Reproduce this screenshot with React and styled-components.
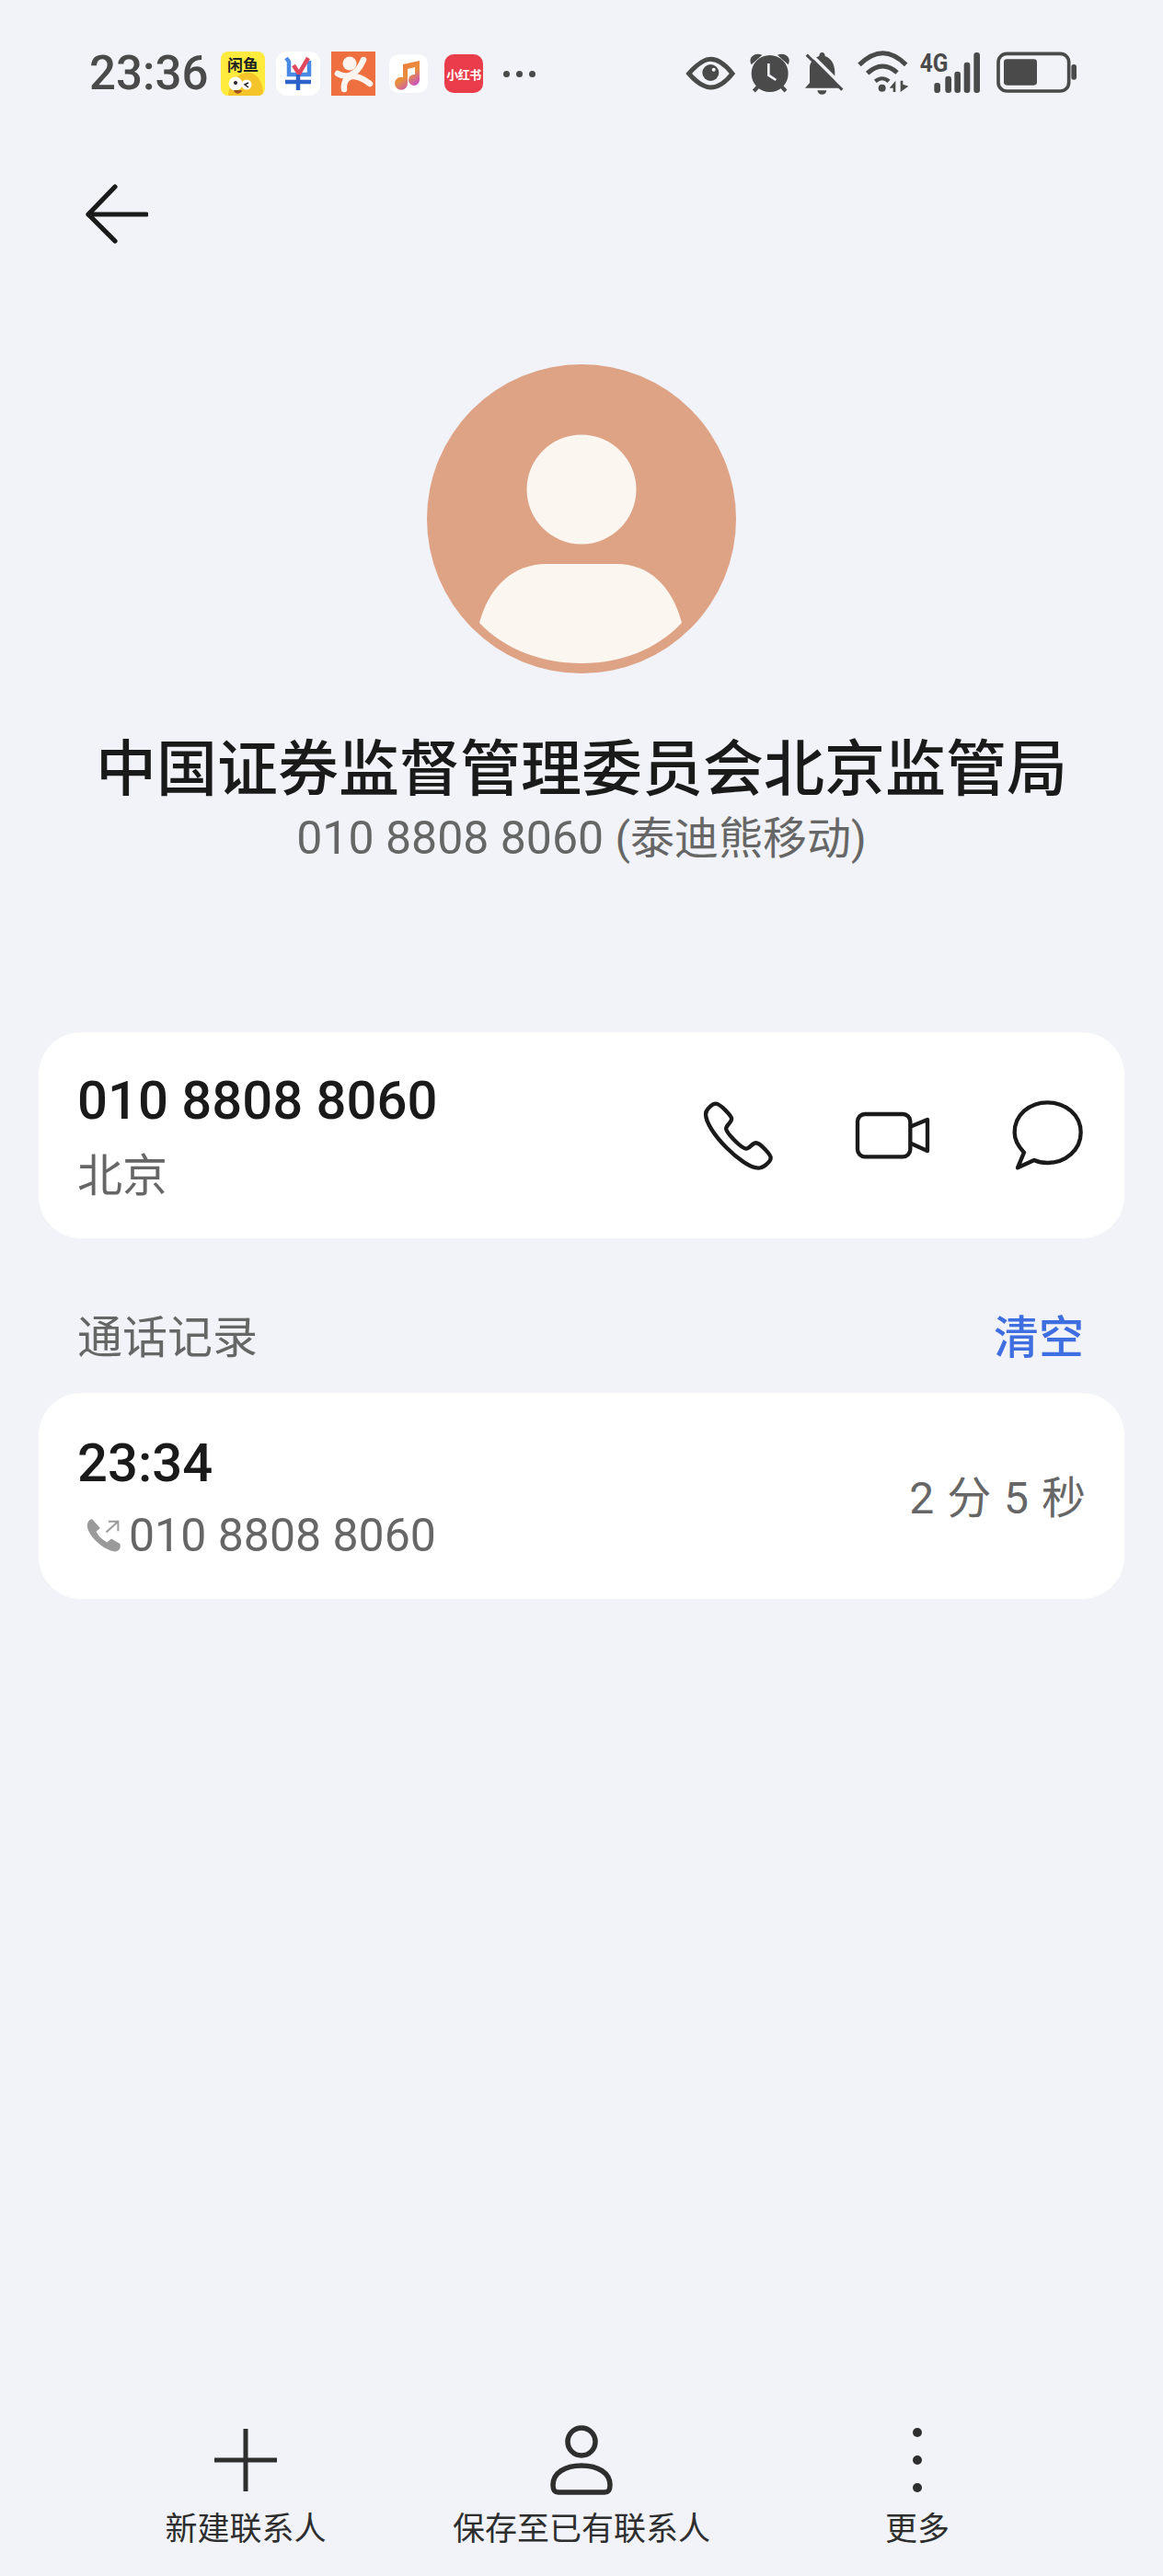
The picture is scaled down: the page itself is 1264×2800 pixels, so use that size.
import React from 'react';
import styled, { createGlobalStyle } from 'styled-components';

const GlobalStyle = createGlobalStyle`
    html, body {
        margin: 0;
        padding: 0;
        background: #f1f3f8;
    }
    * {
        box-sizing: border-box;
    }
`

const Page = styled.div`
    width: 1264px;
    height: 2800px;
    display: flex;
    flex-direction: column;
    background: #f1f3f8;
    color: #1a1a1a;
    font-family: Roboto, "Noto Sans CJK SC", sans-serif;
`

const StatusBar = styled.div`
    height: 105px;
    padding: 55px 91px 0 97px;
    display: flex;
    align-items: center;
`

const Clock = styled.span`
    width: 137px;
    font-size: 51px;
    line-height: 50px;
    font-weight: 500;
    color: #4a4a4a;
    letter-spacing: 0;
`

const AppSlot = styled.div`
    width: 60px;
    height: 50px;
    display: flex;
    align-items: center;
    justify-content: center;
`

const Tile = styled.div`
    width: ${p => p.$size}px;
    height: ${p => p.$size}px;
    border-radius: ${p => p.$radius}px;
    background: ${p => p.$bg};
    overflow: hidden;
    display: flex;
    align-items: center;
    justify-content: center;
    svg {
        display: block;
    }
`

const TileText = styled.span`
    color: #fff;
    font-size: 13px;
    font-weight: 700;
    white-space: nowrap;
    letter-spacing: -0.5px;
`

const MoreDots = styled.div`
    margin-left: 13px;
    display: flex;
    gap: 7px;
    span {
        width: 7px;
        height: 7px;
        border-radius: 50%;
        background: #4a4a4a;
    }
`

const StatusIcons = styled.div`
    margin-left: auto;
    display: flex;
    svg {
        display: block;
        overflow: visible;
    }
`

const BackRow = styled.div`
    margin-top: 95px;
    padding-left: 93px;
    height: 65px;
`

const Profile = styled.div`
    margin-top: 131px;
    display: flex;
    flex-direction: column;
    align-items: center;
`

const Name = styled.div`
    margin-top: 61px;
    font-size: 66px;
    line-height: 88px;
    font-weight: 500;
    white-space: nowrap;
`

const SubName = styled.div`
    font-size: 50px;
    line-height: 60px;
    color: #666;
    white-space: nowrap;
`

const Carrier = styled.span`
    font-size: 48px;
`

const Card = styled.div`
    margin: 0 42px;
    height: 224px;
    padding: 0 42px;
    background: #fff;
    border-radius: 46px;
    display: flex;
    align-items: center;
    justify-content: space-between;
`

const PhoneCard = styled(Card)`
    margin-top: 180px;
`

const Stack = styled.div`
    padding-top: ${p => p.$top}px;
    display: flex;
    flex-direction: column;
    gap: ${p => p.$gap}px;
`

const Primary = styled.div`
    font-size: 58px;
    line-height: 72px;
    font-weight: 500;
`

const Secondary = styled.div`
    font-size: 49px;
    line-height: 64px;
    color: #666;
`

const Actions = styled.div`
    display: flex;
    align-items: center;
    gap: 87px;
    svg {
        display: block;
    }
`

const SectionHead = styled.div`
    margin: 76px 86px 0 84px;
    padding-top: 1px;
    height: 92px;
    display: flex;
    justify-content: space-between;
    font-size: 49px;
    line-height: 64px;
    color: #666;
`

const ClearLink = styled.span`
    color: #3f6ee0;
    font-weight: 500;
`

const CallNumber = styled.div`
    display: flex;
    align-items: center;
    gap: 8px;
    margin-left: 10px;
    font-size: 50px;
    line-height: 64px;
    color: #666;
    svg {
        display: block;
    }
`

const Duration = styled.div`
    padding-bottom: 5px;
    font-size: 48px;
    color: #666;
    word-spacing: 2px;
`

const BottomBar = styled.div`
    margin-top: auto;
    padding-bottom: 27px;
    display: grid;
    grid-template-columns: repeat(3, 365px);
    justify-content: center;
`

const BarItem = styled.div`
    display: flex;
    flex-direction: column;
    align-items: center;
    gap: 15px;
    color: #2e2e2e;
    svg {
        display: block;
    }
`

const BarLabel = styled.div`
    font-size: 35px;
    line-height: 46px;
    white-space: nowrap;
`

const StatusGlyph = ({from, to, children}) => (
    <svg width={(to - from) / 3} height="50" viewBox={`${from} 30 ${to - from} 150`} fill="#4a4a4a">
        {children}
    </svg>
)

const Xianyu = () => (
    <Tile $size={48} $radius={8} $bg="#ffeb3d">
        <svg width="48" height="48" viewBox="0 0 48 48">
            <text x="24" y="21" textAnchor="middle" fontSize="17" fontWeight="700" fill="#222" fontFamily="'Noto Sans CJK SC', sans-serif">闲鱼</text>
            <path d="M8 48 C9 34 18 23 30 23 C39 23 46 32 46 48 Z" fill="#f4c428" />
            <circle cx="16" cy="35" r="7.5" fill="#fff" />
            <circle cx="28" cy="36" r="5.5" fill="#fff" />
            <circle cx="16" cy="34" r="2" fill="#222" />
            <path d="M30 34 L26 36 L30 39" fill="none" stroke="#222" strokeWidth="1.5" />
            <path d="M14 42 H23 C22 47 15 47 14 42 Z" fill="#a4521c" />
        </svg>
    </Tile>
)

const Receipt = () => (
    <Tile $size={48} $radius={12} $bg="#fff">
        <svg width="48" height="48" viewBox="0 0 48 48" fill="none" strokeWidth="4.5">
            <path d="M11 7 L14 11 V25 H36 V10" stroke="#4a8ae6" />
            <path d="M19 15 L25 24 L35 7" stroke="#e0475f" />
            <path d="M10 33 H38 M24 25 V42" stroke="#2f62c8" />
        </svg>
    </Tile>
)

const Dianping = () => (
    <Tile $size={48} $radius={0} $bg="#ee7040">
        <svg width="48" height="48" viewBox="0 0 48 48" fill="none" stroke="#fbf4ef" strokeWidth="6.5" strokeLinecap="round">
            <circle cx="20" cy="13" r="7.5" fill="#fbf4ef" stroke="none" />
            <path d="M7 24 C15 29 27 28 35 9" />
            <path d="M14 41 C13 32 18 27 24 27 C32 27 38 32 42 35" />
        </svg>
    </Tile>
)

const MusicNote = () => (
    <Tile $size={42} $radius={10} $bg="#fff">
        <svg width="42" height="42" viewBox="0 0 42 42">
            <defs>
                <linearGradient id="note" x1="0" y1="0" x2="0.6" y2="1">
                    <stop offset="0" stopColor="#f0703a" />
                    <stop offset="0.6" stopColor="#e8903e" />
                    <stop offset="1" stopColor="#c850c8" />
                </linearGradient>
            </defs>
            <path d="M15 11 L33 7 V28 a6 6 0 1 1 -5 -6 V14 L20 16 V31 a7 7 0 1 1 -5 -6 Z" fill="url(#note)" />
        </svg>
    </Tile>
)

const StatusCluster = () => (
    <StatusIcons>
        <StatusGlyph from={39} to={231}>
            <path d="M56 105 C85 72 105 58 127 58 C150 58 172 72 198 105 C172 138 150 150 127 150 C105 150 85 138 56 105 Z" fill="none" stroke="#4a4a4a" strokeWidth="15" />
            <circle cx="127" cy="102" r="27" />
            <circle cx="137" cy="92" r="6" fill="#f1f3f8" />
        </StatusGlyph>
        <StatusGlyph from={231} to={411}>
            <circle cx="320" cy="105" r="60" />
            <path d="M260 76 C248 55 268 34 295 44 Z M380 76 C392 55 372 34 345 44 Z" />
            <path d="M286 143 L268 162 M354 143 L372 162" stroke="#4a4a4a" strokeWidth="12" />
            <path d="M316 72 V110 L340 126" fill="none" stroke="#f1f3f8" strokeWidth="8" />
        </StatusGlyph>
        <StatusGlyph from={411} to={591}>
            <path d="M490 36 C497 36 500 42 500 48 C520 54 532 75 532 100 V135 L548 152 H435 L450 135 V85 C450 68 465 53 481 48 C481 42 484 36 490 36 Z" />
            <path d="M475 160 H505 C503 178 478 178 475 160 Z" />
            <path d="M448 36 L568 156" stroke="#f1f3f8" strokeWidth="11" />
            <path d="M440 44 L556 158" stroke="#4a4a4a" strokeWidth="9" />
        </StatusGlyph>
        <StatusGlyph from={591} to={801}>
            <path d="M612 76 C665 26 712 26 764 76" fill="none" stroke="#4a4a4a" strokeWidth="15" />
            <path d="M638 104 C670 74 705 74 735 102" fill="none" stroke="#4a4a4a" strokeWidth="15" />
            <path d="M664 130 C678 118 695 118 708 130" fill="none" stroke="#4a4a4a" strokeWidth="13" />
            <circle cx="686" cy="152" r="12" />
            <path d="M710 152 L730 128 V165 H722 V152 Z M746 128 H754 V140 L772 146 L746 165 Z" />
        </StatusGlyph>
        <StatusGlyph from={801} to={1035}>
            <text x="809" y="100" fontSize="84" fontWeight="700" textLength="92" lengthAdjust="spacingAndGlyphs" fontFamily="Roboto, sans-serif">4G</text>
            <rect x="856" y="135" width="20" height="33" rx="9" />
            <rect x="892" y="113" width="20" height="55" rx="9" />
            <rect x="922" y="98" width="20" height="70" rx="9" />
            <rect x="953" y="68" width="20" height="100" rx="9" />
            <rect x="985" y="36" width="20" height="132" rx="9" />
        </StatusGlyph>
        <StatusGlyph from={1035} to={1329}>
            <rect x="1065" y="40" width="230" height="122" rx="28" fill="none" stroke="#4a4a4a" strokeWidth="11" />
            <rect x="1083" y="58" width="108" height="85" rx="10" />
            <rect x="1303" y="75" width="17" height="50" rx="8" />
        </StatusGlyph>
    </StatusIcons>
)

const PhoneIcon = () => (
    <svg width="77" height="77" viewBox="190 105 230 230" fill="none" stroke="#1a1a1a" strokeWidth="13" strokeLinejoin="round">
        <path d="M232 116 C245 116 283 155 283 165 C283 178 265 185 265 197 C265 210 315 262 330 262 C342 262 350 243 362 243 C375 243 410 280 410 292 C410 305 385 325 370 325 C320 325 199 205 199 150 C199 135 220 116 232 116 Z" />
    </svg>
)

const VideoIcon = () => (
    <svg width="85" height="55" viewBox="685 140 255 165" fill="none" stroke="#1a1a1a" strokeWidth="13" strokeLinejoin="round">
        <rect x="697" y="152" width="172" height="139" rx="24" />
        <path d="M872 192 L925 170 V272 L872 248" />
    </svg>
)

const ChatIcon = () => (
    <svg width="80" height="78" viewBox="1198 105 240 234" fill="none" stroke="#1a1a1a" strokeWidth="13" strokeLinejoin="round">
        <path d="M1237 278 C1215 255 1206 235 1206 213 C1206 155 1255 115 1313 115 C1372 115 1422 155 1422 213 C1422 270 1372 312 1313 312 C1297 312 1285 310 1270 303 L1216 328 Z" />
    </svg>
)

const OutgoingIcon = () => (
    <svg width="38" height="38" viewBox="100 85 115 115">
        <path d="M118 88 C105 92 100 105 104 120 C115 155 160 190 190 195 C205 197 215 185 210 170 L182 153 L167 165 C150 155 140 145 132 130 L145 118 Z" fill="#9a9a9a" />
        <path d="M165 132 L203 97 M172 96 H204 V128" fill="none" stroke="#9a9a9a" strokeWidth="6" />
    </svg>
)

const App = () => {
    return (
        <Page>
            <GlobalStyle />
            <StatusBar>
                <Clock>23:36</Clock>
                <AppSlot><Xianyu /></AppSlot>
                <AppSlot><Receipt /></AppSlot>
                <AppSlot><Dianping /></AppSlot>
                <AppSlot><MusicNote /></AppSlot>
                <AppSlot>
                    <Tile $size={42} $radius={10} $bg="#e93d4b">
                        <TileText>小红书</TileText>
                    </Tile>
                </AppSlot>
                <MoreDots><span /><span /><span /></MoreDots>
                <StatusCluster />
            </StatusBar>

            <BackRow>
                <svg width="68" height="65" viewBox="0 0 68 65" fill="none" stroke="#1a1a1a" strokeWidth="5.2" strokeLinecap="round" strokeLinejoin="round">
                    <path d="M32 3 L3 33 L32 62 M3 33 H66" />
                </svg>
            </BackRow>

            <Profile>
                <svg width="336" height="336" viewBox="0 0 336 336">
                    <circle cx="168" cy="168" r="168" fill="#dea285" />
                    <circle cx="168" cy="136" r="59.5" fill="#fcf6f1" />
                    <path d="M57 281 C68 240 95 217 130 217 H206 C241 217 266 240 277 281 C250 310 210 325 168 325 C126 325 84 310 57 281 Z" fill="#fcf6f1" />
                </svg>
                <Name>中国证券监督管理委员会北京监管局</Name>
                <SubName>010 8808 8060 <Carrier>(泰迪熊移动)</Carrier></SubName>
            </Profile>

            <PhoneCard>
                <Stack $gap={15} $top={3}>
                    <Primary>010 8808 8060</Primary>
                    <Secondary>北京</Secondary>
                </Stack>
                <Actions>
                    <PhoneIcon />
                    <VideoIcon />
                    <ChatIcon />
                </Actions>
            </PhoneCard>

            <SectionHead>
                <span>通话记录</span>
                <ClearLink>清空</ClearLink>
            </SectionHead>

            <Card>
                <Stack $gap={11} $top={3}>
                    <Primary>23:34</Primary>
                    <CallNumber>
                        <OutgoingIcon />
                        010 8808 8060
                    </CallNumber>
                </Stack>
                <Duration>2 分 5 秒</Duration>
            </Card>

            <BottomBar>
                <BarItem>
                    <svg width="76" height="76" viewBox="0 0 76 76" fill="none" stroke="#2e2e2e" strokeWidth="5">
                        <path d="M4 38 H72 M38 4 V72" />
                    </svg>
                    <BarLabel>新建联系人</BarLabel>
                </BarItem>
                <BarItem>
                    <svg width="76" height="76" viewBox="0 0 76 76" fill="none" stroke="#2e2e2e" strokeWidth="5.5">
                        <circle cx="38" cy="18" r="15" />
                        <path d="M7 65 C7 52 20 44 38 44 C56 44 69 52 69 65 C69 71 67 73 63 73 H13 C9 73 7 71 7 65 Z" />
                    </svg>
                    <BarLabel>保存至已有联系人</BarLabel>
                </BarItem>
                <BarItem>
                    <svg width="76" height="76" viewBox="0 0 76 76" fill="#2e2e2e">
                        <circle cx="38" cy="8" r="5" />
                        <circle cx="38" cy="38" r="5" />
                        <circle cx="38" cy="68" r="5" />
                    </svg>
                    <BarLabel>更多</BarLabel>
                </BarItem>
            </BottomBar>
        </Page>
    )
}

export default App;
